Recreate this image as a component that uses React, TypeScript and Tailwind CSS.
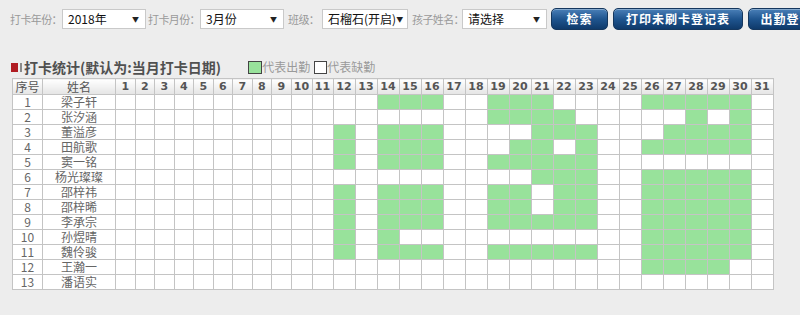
import React from 'react';

const FONT = '"Noto Sans CJK SC", "DejaVu Sans", sans-serif';

const all = (a: number, b: number) => Array.from({ length: b - a + 1 }, (_, i) => a + i);

const STUDENTS: [string, number[]][] = [
  ['梁子轩', [14, 15, 16, 19, 20, 21, ...all(26, 30)]],
  ['张汐涵', [19, 20, 21, 22, 28, 30]],
  ['董溢彦', [12, 14, 15, 16, 21, 22, 23, 27, 28, 29, 30]],
  ['田航歌', [12, 14, 15, 16, 20, 21, 23, ...all(26, 30)]],
  ['窦一铭', [12, 14, 15, 16, ...all(19, 23)]],
  ['杨光璨璨', [21, 22, 23, ...all(26, 30)]],
  ['邵梓祎', [12, 14, 15, 16, 19, 20, 22, 23, ...all(26, 30)]],
  ['邵梓晞', [12, 14, 15, 16, 19, 20, 22, 23, ...all(26, 30)]],
  ['李承宗', [12, 14, 15, 16, ...all(19, 23), ...all(26, 30)]],
  ['孙煜晴', [12, 14, ...all(26, 30)]],
  ['魏伶骏', [12, 14, 15, 16, ...all(19, 23), ...all(26, 30)]],
  ['王瀚一', [26, 27, 28, 29]],
  ['潘语实', []],
];

const DAYS = all(1, 31);

// day column widths read off the screenshot
const dayWidth = (d: number) => (d <= 9 ? 'w-[19.5px]' : d <= 11 ? 'w-[21px]' : 'w-[22px]');

function Label({ text, width }: { text: string; width: string }) {
  return (
    <span className={`${width} shrink-0 text-[11px] tracking-[-0.6px] text-[#9a9a9a] whitespace-nowrap`}>
      {text}
    </span>
  );
}

function FakeSelect({ value, width }: { value: string; width: string }) {
  return (
    <div
      className={`${width} h-[20px] shrink-0 bg-white border border-[#c9c9c9] flex items-center justify-between pl-[5px] pr-[6px] text-[12px] text-[#111]`}
    >
      <span className="leading-none">{value}</span>
      <span className="text-[7px] text-[#222] leading-none">▼</span>
    </div>
  );
}

function Btn({ label, width }: { label: string; width: string }) {
  return (
    <div
      className={`${width} h-[22px] shrink-0 rounded-[5px] border border-[#15375e] bg-gradient-to-b from-[#4a80b8] via-[#1f558f] to-[#0f3a6b] text-white text-[12px] font-bold flex items-center justify-center tracking-[1px] shadow-[inset_0_1px_0_rgba(255,255,255,0.35)]`}
    >
      {label}
    </div>
  );
}

export default function App() {
  return (
    <div className="w-[800px] h-[315px] bg-[#ededed] overflow-hidden" style={{ fontFamily: FONT }}>
      {/* filter bar */}
      <div className="flex items-center h-[20px] mt-[9px] pl-[10px] whitespace-nowrap">
        <Label text="打卡年份：" width="w-[52px]" />
        <FakeSelect value="2018年" width="w-[84px]" />
        <Label text="打卡月份：" width="w-[52px] ml-[2px]" />
        <FakeSelect value="3月份" width="w-[84px]" />
        <Label text="班级：" width="w-[34px] ml-[4px]" />
        <FakeSelect value="石榴石(开启)" width="w-[86px]" />
        <Label text="孩子姓名：" width="w-[50px] ml-[4px]" />
        <FakeSelect value="请选择" width="w-[85px]" />
        <div className="flex gap-[5px] ml-[4px]">
          <Btn label="检索" width="w-[57px]" />
          <Btn label="打印未刷卡登记表" width="w-[130px]" />
          <Btn label="出勤登记表" width="w-[90px]" />
        </div>
      </div>

      {/* title + legend */}
      <div className="flex items-center mt-[28px] pl-[11px] h-[20px]">
        <span className="w-[7px] h-[9px] bg-[#b01c22]" />
        <span className="w-[2px] h-[9px] bg-[#8a8a8a] ml-[2px]" />
        <span className="ml-[2px] text-[14px] font-bold text-[#505050]">打卡统计(默认为:当月打卡日期)</span>
        <span className="ml-[27px] w-[14px] h-[13px] bg-[#98e29b] border border-[#444]" />
        <span className="text-[12px] text-[#9a9a9a]">代表出勤</span>
        <span className="ml-[4px] w-[13px] h-[13px] bg-white border border-[#444]" />
        <span className="text-[12px] text-[#9a9a9a]">代表缺勤</span>
      </div>

      {/* attendance grid */}
      <table className="ml-[12px] mt-[1px] border-collapse table-fixed w-[760px]">
        <colgroup>
          <col className="w-[30px]" />
          <col className="w-[73px]" />
          {DAYS.map((d) => (
            <col key={d} className={dayWidth(d)} />
          ))}
        </colgroup>
        <thead>
          <tr className="h-[16px]">
            <th className="border border-[#c4c4c4] bg-gradient-to-b from-white to-[#e4e4e4] text-[12px] font-normal text-[#555] leading-none p-0">
              序号
            </th>
            <th className="border border-[#c4c4c4] bg-gradient-to-b from-white to-[#e4e4e4] text-[12px] font-normal text-[#555] leading-none p-0">
              姓名
            </th>
            {DAYS.map((d) => (
              <th
                key={d}
                className="border border-[#c4c4c4] bg-gradient-to-b from-white to-[#e4e4e4] text-[11px] font-bold text-[#555] leading-none p-0"
                style={{ fontFamily: '"DejaVu Sans", sans-serif' }}
              >
                {d}
              </th>
            ))}
          </tr>
        </thead>
        <tbody>
          {STUDENTS.map(([name, days], i) => (
            <tr key={name} className="h-[15px]">
              <td className="border border-[#c4c4c4] bg-white text-center text-[12px] text-[#666] leading-none p-0">
                {i + 1}
              </td>
              <td className="border border-[#c4c4c4] bg-white text-center text-[12px] text-[#666] leading-none p-0">
                {name}
              </td>
              {DAYS.map((d) => (
                <td
                  key={d}
                  className={`border border-[#c4c4c4] p-0 ${days.includes(d) ? 'bg-[#98e29b]' : 'bg-white'}`}
                />
              ))}
            </tr>
          ))}
        </tbody>
      </table>
    </div>
  );
}
